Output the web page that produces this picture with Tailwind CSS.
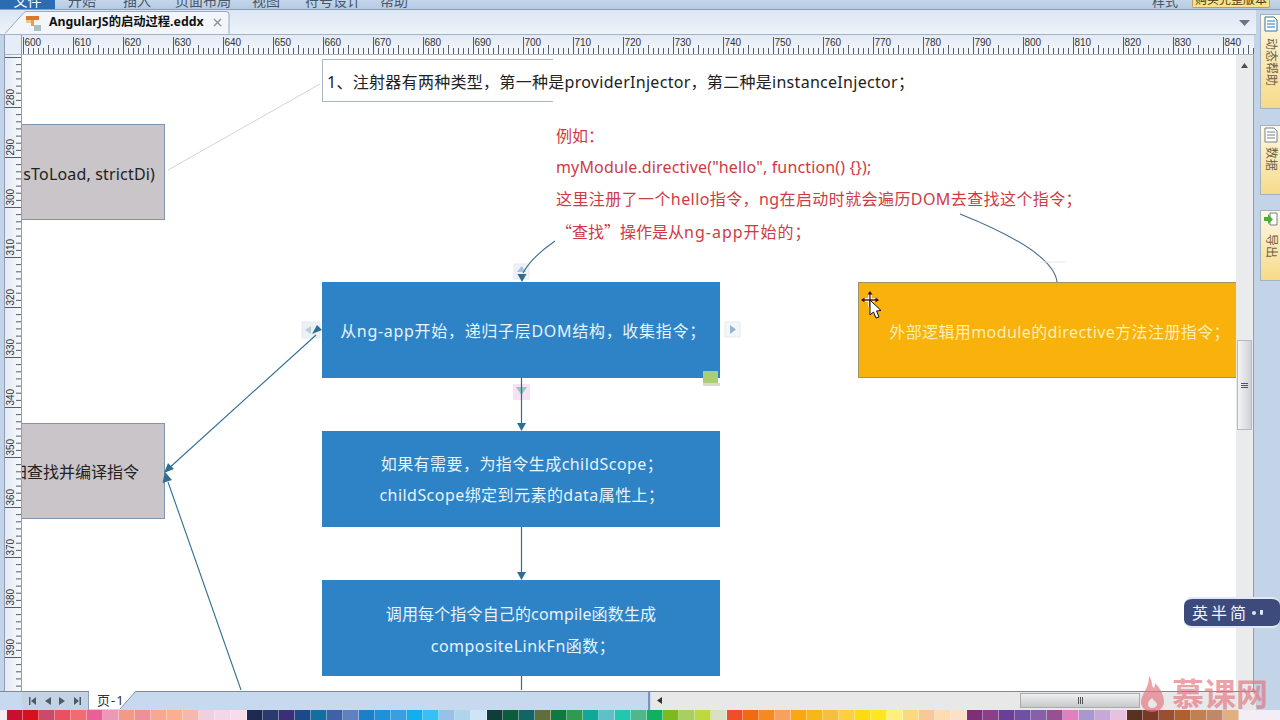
<!DOCTYPE html>
<html lang="zh-CN">
<head>
    <meta charset="UTF-8">
    <meta name="viewport" content="width=device-width, initial-scale=1.0">
    <title>AngularJS的启动过程.eddx</title>
    <script src="https://cdn.jsdelivr.net/npm/@tailwindcss/browser@4"></script>
</head>
<body class="bg-[#c3d4e8] overflow-hidden">
<div class="relative w-[1280px] h-[720px] flex flex-col overflow-hidden font-['Noto_Sans','Noto_Sans_CJK_TC',sans-serif]">

    <!-- Ribbon menu, only the lower edge is visible -->
    <div class="h-[10px] shrink-0 flex items-end overflow-hidden bg-gradient-to-b from-[#c4d6ea] to-[#b4cae2] border-b border-[#8c9db4] text-[14px] text-[#4a5668] leading-[14px]">
        <div class="w-[55px] h-[9px] bg-[#2a6cb4] text-white text-center overflow-hidden"><span class="block -mt-[6px]">文件</span></div>
        <div class="flex-1 h-[9px] overflow-hidden relative">
            <div class="flex -mt-[6px]">
                <span class="ml-[13px]">开始</span>
                <span class="ml-[27px]">插入</span>
                <span class="ml-[24px]">页面布局</span>
                <span class="ml-[21px]">视图</span>
                <span class="ml-[25px]">符号设计</span>
                <span class="ml-[19px]">帮助</span>
            </div>
        </div>
        <div class="w-[128px] h-[9px] overflow-hidden flex">
            <span class="-mt-[6px] text-[13px]">样式</span>
            <span class="ml-[14px] w-[78px] h-[8px] bg-[#fbe28a] border-b border-x border-[#b9a15c] rounded-b-[2px] text-[12px] text-center text-[#4a3c10] overflow-hidden"><span class="block -mt-[7px] whitespace-nowrap">购买完整版本</span></span>
        </div>
    </div>

    <div class="flex-1 min-h-0 flex">
        <!-- Document area -->
        <div class="w-[1256px] flex flex-col">
            <!-- Tab strip -->
            <div class="h-[24px] shrink-0 flex items-end pl-[5px] bg-gradient-to-b from-[#dbe6f3] to-[#eef3fa]">
                <div class="relative h-[23px] w-[225px] flex items-center pl-[20px]">
                    <svg class="absolute left-0 top-0" width="225" height="23" viewBox="0 0 225 23">
                        <path d="M0 22.5 L19 1.5 Q20 .5 22 .5 L221 .5 Q224 .5 224 3 L224 23" fill="#f2f6fb" stroke="#9aa9bd"/>
                    </svg>
                    <svg class="relative" width="17" height="18" viewBox="0 0 17 18">
                        <rect x="1" y="2" width="13" height="4" fill="#d9782f"/>
                        <rect x="6" y="6" width="3" height="6" fill="#e0a050"/>
                        <rect x="9" y="11" width="7" height="6" fill="#a9bfc4"/>
                        <rect x="1" y="6" width="5" height="3" fill="#f0c888"/>
                    </svg>
                    <span class="relative ml-[7px] text-[12.300px] font-bold text-[#111] whitespace-nowrap">AngularJS的启动过程.eddx</span>
                    <svg class="relative ml-[9px]" width="9" height="9" viewBox="0 0 9 9"><path d="M1 1 L8 8 M8 1 L1 8" stroke="#8b929c" stroke-width="1.4"/></svg>
                </div>
                <svg class="ml-auto mb-[8px] mr-[6px]" width="11" height="6" viewBox="0 0 11 6"><path d="M0 0 H11 L5.500 6 Z" fill="#6a7686"/></svg>
            </div>

            <!-- Rulers and page -->
            <div class="flex-1 min-h-0 flex pl-[4px] border-t border-[#a3b2c6]">
                <div class="w-[18px] shrink-0 flex flex-col border-x border-[#8da0ba] overflow-hidden">
                    <div class="h-[20px] shrink-0 bg-[#e6edf7] border-b border-[#aab8ca]"></div>
                    <svg id="rulerLeft" class="shrink-0 bg-gradient-to-r from-[#e3eaf5] to-[#f7f9fc]" width="16" height="636" viewBox="5 55 16 636"></svg>
                </div>
                <div class="flex-1 min-w-0 flex flex-col">
                    <svg id="rulerTop" class="shrink-0 bg-gradient-to-b from-[#e3eaf5] to-[#f7f9fc]" width="1232" height="20" viewBox="22 35 1232 20"></svg>
                    <div class="flex-1 min-h-0 flex">
                        <!-- Canvas -->
                        <div class="relative w-[1214px] bg-white overflow-hidden">
                            <!-- note -->
                            <div class="absolute left-[300px] top-[4px] w-[231px] h-[43px] border-y border-l border-[#a9b7c9]"></div>
                            <div class="absolute left-[305px] top-[15px] text-[16px] leading-[24px] tracking-[0.290px] text-[#222] whitespace-nowrap">1、注射器有两种类型，第一种是providerInjector，第二种是instanceInjector；</div>

                            <!-- red note -->
                            <div class="absolute left-[534px] top-[66px] text-[16px] leading-[31.500px] text-[#cf3a44] whitespace-nowrap">
                                <div>例如：</div>
                                <div class="-mt-px tracking-[0.150px]">myModule.directive("hello", function() {});</div>
                                <div class="mt-px tracking-[0.410px]">这里注册了一个hello指令，ng在启动时就会遍历DOM去查找这个指令；</div>
                                <div><span class="font-['Noto_Sans_CJK_TC',sans-serif]">“</span>查找<span class="font-['Noto_Sans_CJK_TC',sans-serif]">”</span>操作是从<span class="tracking-[1px]">ng-app开始的；</span></div>
                            </div>

                            <!-- gray nodes -->
                            <div class="absolute left-0 top-[69px] w-[143px] h-[96px] bg-[#c9c5c8] border-y border-r border-[#7f96b0] overflow-hidden flex items-center justify-end pr-[9px] pt-[4px] text-[16px] tracking-[0.170px] text-[#222] whitespace-nowrap">sToLoad, strictDi)</div>
                            <div class="absolute left-0 top-[368px] w-[143px] h-[96px] bg-[#c9c5c8] border-y border-r border-[#7f96b0] overflow-hidden flex items-center justify-end pr-[25px] pt-[2px] text-[16px] text-[#222] whitespace-nowrap">归查找并编译指令</div>

                            <!-- blue nodes -->
                            <div class="absolute left-[300px] top-[227px] w-[398px] h-[96px] bg-[#2e83c7] flex items-center justify-center text-[16px] tracking-[0.700px] text-[#e6f3fb] whitespace-nowrap pl-[4px] pt-[2px]">从ng-app开始，递归子层DOM结构，收集指令；</div>
                            <div class="absolute left-[300px] top-[376px] w-[398px] h-[96px] bg-[#2e83c7] flex flex-col items-center justify-center text-[16px] leading-[31.500px] tracking-[0.450px] text-[#e6f3fb] whitespace-nowrap pl-[2px] pt-[2px]">
                                <div>如果有需要，为指令生成childScope；</div>
                                <div>childScope绑定到元素的data属性上；</div>
                            </div>
                            <div class="absolute left-[300px] top-[525px] w-[398px] h-[96px] bg-[#2e83c7] flex flex-col items-center justify-center text-[16px] leading-[31.500px] text-[#e6f3fb] whitespace-nowrap pt-[5px]">
                                <div class="tracking-[0.150px]">调用每个指令自己的compile函数生成</div>
                                <div class="ml-[4px] tracking-[0.500px]">compositeLinkFn函数；</div>
                            </div>

                            <!-- orange node -->
                            <div class="absolute left-[836px] top-[227px] w-[378px] h-[96px] bg-[#f9b10b] border-y border-l border-[#9c9468] flex items-center justify-end pr-[6px] pt-[3px] text-[16px] tracking-[0.400px] text-[#fdeeb8] whitespace-nowrap">外部逻辑用module的directive方法注册指令；</div>

                            <!-- connectors, handles, cursor -->
                            <svg class="absolute left-0 top-0" width="1214" height="635" viewBox="22 55 1214 635" fill="none">
                                <rect x="514" y="264" width="15" height="15" fill="#eef2f6" stroke="#e6e9ee"/>
                                <path d="M521.500 266 L526 272 H517 Z" fill="#a5c4dc"/>
                                <rect x="302" y="322" width="18" height="16" fill="#eef1f4" stroke="#e6e9ed"/>
                                <path d="M305 330 L311 326 V334 Z" fill="#b2d2da"/>
                                <rect x="725" y="322" width="15" height="15" fill="#f4f6f8" stroke="#e6e9ed"/>
                                <path d="M736 329.500 L730 325 V334 Z" fill="#8cb8d2"/>
                                <rect x="513" y="384" width="17" height="16" fill="#f4e3f2"/>
                                <path d="M521.500 395 L516 387 H527 Z" fill="#8fcac2"/>
                                <rect x="703" y="371" width="15" height="13" fill="#a9cf72"/>
                                <rect x="703" y="383" width="17" height="3" fill="#d9d9cf"/>

                                <path d="M168 170 L320 84" stroke="#d0d4da"/>
                                <path d="M555 241 C542 250 530 260 523 273" stroke="#3b6d90" stroke-width="1.100"/>
                                <path d="M960 214 C1000 230 1054 255 1057 282" stroke="#4a6c88" stroke-width="1.100"/>
                                <path d="M1040 262 H1066" stroke="#e3e6ea"/>
                                <path d="M167 470 L316 335" stroke="#2f6e92" stroke-width="1.100"/>
                                <path d="M241 690 L168 482" stroke="#2f6e92" stroke-width="1.100"/>
                                <path d="M521.500 378 V424 M521.500 527 V573 M521.500 676 V690" stroke="#2f6e92" stroke-width="1.200"/>
                                <path d="M521.500 431 L517 423 H526 Z M521.500 580 L517 572 H526 Z M522 282 L517.500 274 H526.500 Z" fill="#2f6e92"/>
                                <path d="M322 330 L312 334 L317 325 Z" fill="#2f6e92"/>
                                <path d="M164 473 L168 463 L174 469 Z M165 472 L162.500 483 L172 480 Z" fill="#2f6e92"/>

                                <!-- move cursor -->
                                <path d="M870 293 V307 M863 300 H877" stroke="#fff" stroke-width="3.500"/>
                                <path d="M870 293 V307 M863 300 H877" stroke="#5c1010" stroke-width="1.300"/>
                                <path d="M870 291 L867.500 294.500 H872.500 Z M861 300 L864.500 297.500 V302.500 Z M879 300 L875.500 297.500 V302.500 Z" fill="#3a0a0a"/>
                                <path d="M870 300 V315 L873.500 312 L876 318 L879 317 L876.500 311 L881 310.500 Z" fill="#fff" stroke="#111" stroke-width="1"/>
                            </svg>
                        </div>

                        <!-- Vertical scrollbar -->
                        <div class="relative w-[18px] bg-[#eaebed] border-r border-[#8da0ba]">
                            <svg class="absolute left-[5px] top-[8px]" width="7" height="5" viewBox="0 0 7 5"><path d="M3.500 0 L7 5 H0 Z" fill="#4a4f56"/></svg>
                            <div class="absolute left-[1px] top-[285px] w-[15px] h-[90px] bg-gradient-to-r from-[#f4f4f5] to-[#cfd2d6] border border-[#b5bac1] flex flex-col items-center justify-center gap-[1px]">
                                <div class="w-[7px] h-px bg-[#555]"></div>
                                <div class="w-[7px] h-px bg-[#555]"></div>
                                <div class="w-[7px] h-px bg-[#555]"></div>
                            </div>
                        </div>
                    </div>
                </div>
            </div>

            <!-- Sheet tabs and horizontal scrollbar -->
            <div class="h-[19px] shrink-0 flex pl-[22px] border-t border-[#7f8894] bg-[#c6d9ee]">
                <div class="w-[67px] flex items-center justify-around px-[3px] bg-[#c4d3e4] border-r border-[#8da0ba]">
                    <svg width="7" height="8" viewBox="0 0 7 8"><path d="M0 0 H1.500 V8 H0 Z M7 0 V8 L2 4 Z" fill="#4b5a6c"/></svg>
                    <svg width="6" height="8" viewBox="0 0 6 8"><path d="M6 0 V8 L0 4 Z" fill="#4b5a6c"/></svg>
                    <svg width="6" height="8" viewBox="0 0 6 8"><path d="M0 0 V8 L6 4 Z" fill="#4b5a6c"/></svg>
                    <svg width="7" height="8" viewBox="0 0 7 8"><path d="M0 0 V8 L5 4 Z M5.500 0 H7 V8 H5.500 Z" fill="#4b5a6c"/></svg>
                </div>
                <div class="relative w-[48px] -mt-px">
                    <svg class="absolute left-0 top-0" width="48" height="19" viewBox="0 0 48 19"><path d="M0 0 H47 L31 18 H0 Z" fill="#fff"/><path d="M47 0 L31 18" stroke="#8896a8"/></svg>
                    <span class="absolute left-[8px] top-0 text-[13px] leading-[19px] tracking-[1px] text-[#333] whitespace-nowrap">页-1</span>
                </div>
                <div class="w-[510px]"></div>
                <div class="w-[4px] bg-[#7f93b5] border-x border-[#c6d9ee]"></div>
                <div class="flex-1 relative bg-[#e8e8e9]">
                    <svg class="absolute left-[6px] top-[5px]" width="5" height="7" viewBox="0 0 5 7"><path d="M5 0 V7 L0 3.500 Z" fill="#333"/></svg>
                    <div class="absolute left-[369px] top-[1px] w-[120px] h-[15px] bg-gradient-to-b from-[#f0f0f0] to-[#c7c8ca] border border-[#a9abae] flex items-center justify-center gap-[1px]">
                        <div class="w-px h-[7px] bg-[#555]"></div>
                        <div class="w-px h-[7px] bg-[#555]"></div>
                        <div class="w-px h-[7px] bg-[#555]"></div>
                    </div>
                </div>
            </div>
        </div>

        <!-- Right side panel tabs -->
        <div class="w-[24px] flex flex-col pl-[4px] pt-[4px] bg-[#c3d4e8]">
            <div class="h-[95px] w-[20px] flex flex-col items-center gap-[6px] pt-[1px] bg-gradient-to-b from-[#fdf8e4] to-[#f7da88] border border-r-0 border-[#a5b2bf] overflow-hidden">
                <svg class="shrink-0" width="14" height="16" viewBox="0 0 14 16"><path d="M1 1 H10 L13 4 V15 H1 Z" fill="#fff" stroke="#2f72b8"/><path d="M3 5 H11 M3 8 H11 M3 11 H11" stroke="#2f72b8"/></svg>
                <span class="[writing-mode:vertical-rl] [text-orientation:sideways] text-[12px] leading-[14px] text-[#6b5f45] whitespace-nowrap">动态帮助</span>
            </div>
            <div class="h-[70px] w-[20px] mt-[16px] flex flex-col items-center gap-[4px] pt-[1px] bg-gradient-to-b from-[#fdf8e4] to-[#f7da88] border border-r-0 border-[#a5b2bf] overflow-hidden">
                <svg class="shrink-0" width="14" height="16" viewBox="0 0 14 16"><path d="M1 1 H10 L13 4 V15 H1 Z" fill="#fff" stroke="#77808c"/><path d="M3 5 H11 M3 8 H11 M3 11 H11" stroke="#77808c"/></svg>
                <span class="[writing-mode:vertical-rl] [text-orientation:sideways] text-[12px] leading-[14px] text-[#6b5f45] whitespace-nowrap">数据</span>
            </div>
            <div class="h-[71px] w-[20px] mt-[15px] flex flex-col items-center gap-[7px] pt-[1px] bg-gradient-to-b from-[#fdf8e4] to-[#f7da88] border border-r-0 border-[#a5b2bf] overflow-hidden">
                <svg class="shrink-0" width="16" height="15" viewBox="0 0 16 15"><path d="M7 1 H14 V13 H7 Z" fill="#fff" stroke="#77808c"/><path d="M1 5 H5 V2 L10 7.500 L5 12 V9 H1 Z" fill="#4fae3a"/></svg>
                <span class="[writing-mode:vertical-rl] [text-orientation:sideways] text-[12px] leading-[14px] text-[#6b5f45] whitespace-nowrap">导出</span>
            </div>
        </div>
    </div>

    <!-- Colour palette -->
    <div id="palette" class="h-[10px] shrink-0 flex pl-[7px] bg-[#f3eef5]"></div>

    <!-- Input method pill -->
    <div class="absolute left-[1184px] top-[597px] w-[96px] h-[31px] rounded-[8px] bg-[#3c4b7b] border-y-[2px] border-[#e4e8f4] flex items-center pl-[8px] text-[16px] tracking-[3px] text-[#f0f3fa]">
        <span class="whitespace-nowrap">英半简</span>
        <span class="ml-[3px] w-[4px] h-[4px] rounded-full bg-[#dfe6f5]"></span>
        <span class="ml-[4px] w-[3px] h-[5px] rounded-b-full bg-[#dfe6f5]"></span>
    </div>

    <!-- Watermark -->
    <div class="absolute left-[1140px] top-[674px] flex items-center opacity-65 text-[#e2737b]">
        <svg width="25" height="38" viewBox="0 0 25 38"><path d="M9 1 C13 6 11 11 14 13 C15 11 15 10 15 8 C20 13 24 20 24 27 C24 33 18 37 12 37 C6 37 1 33 1 27 C1 19 9 14 9 1 Z M12 23 C8 26 7 29 9 32 C12 34 16 33 17 30 C17 27 14 26 12 23 Z" fill="#e2737b" fill-rule="evenodd"/></svg>
        <span class="ml-[7px] text-[32px] leading-[40px] font-bold whitespace-nowrap">慕课网</span>
    </div>
</div>

<script>
    // rulers: 5px per unit across, labels every 10 units
    var top_ = document.getElementById('rulerTop');
    var html = '<path d="M22 54.500 H1254" stroke="#aab8ca"/>';
    for (var i = 0; i < 247; i++) {
        var x = 23.5 + i * 5;
        var len = i % 10 === 0 ? 17 : (i % 5 === 0 ? 9 : 6);
        html += '<path d="M' + x + ' 54 V' + (54 - len) + '" stroke="#565e6a"/>';
        if (i % 10 === 0) html += '<text x="' + (x + 1) + '" y="46" font-size="10" font-family="Liberation Sans" fill="#333">' + (600 + i) + '</text>';
    }
    top_.innerHTML = html;

    var left_ = document.getElementById('rulerLeft');
    html = '';
    for (var j = 0; j < 90; j++) {
        var y = 57.5 + j * 50 / 7;
        var major = j % 7 === 0;
        html += '<path d="M' + (major ? 5 : 16) + ' ' + y.toFixed(1) + ' H21" stroke="#565e6a"/>';
        if (major && j > 0) {
            var label = 270 + j / 7 * 10;
            html += '<text transform="translate(14 ' + (y - 2) + ') rotate(-90)" font-size="10" font-family="Liberation Sans" fill="#333">' + label + '</text>';
        }
    }
    left_.innerHTML = html;

    var colors = ['#c8102e','#d7101f','#c94a6a','#ea5060','#f06c70','#ea5f98','#ea9ab8','#f29a85','#ee9098','#f8a890','#fbae90','#f6b8ae','#f0d0e0','#f5d5e8','#f8dcea',
        '#1f2a52','#2a3a70','#3b2f78','#1c4a88','#146fa0','#4060a8','#6080c0','#1a80c8','#2090d8','#38a0e0','#10b0f0','#38c0f5','#98c0e8','#b0d4ec','#d0e4f8',
        '#0f3d3a','#0a5c3c','#126465','#5f6e3a','#0f7a40','#2f9a50','#10a898','#60c0c8','#20c8b0','#50b888','#10b060','#80b820','#a8d060','#c0d840','#d8e0c8',
        '#f04e28','#f06a10','#f58a20','#f8a060','#f8a810','#f5b818','#f5c040','#fcd040','#fcdc10','#fde820','#fdf080','#fcd880','#f8c898','#fcdcb0','#fde0c8',
        '#7f2f78','#8a4088','#6a3f98','#7050a0','#8860a8','#985090','#e080c0','#a898d0','#c8a8d8','#e8c0e0',
        '#5a3020','#7a3828','#985030','#b06030','#c08050','#c08868','#e0b080'];
    var palette = document.getElementById('palette');
    colors.forEach(function (c) {
        var s = document.createElement('div');
        s.className = 'w-[16px] h-full border-r border-white/40';
        s.style.backgroundColor = c;
        palette.appendChild(s);
    });
</script>
</body>
</html>
